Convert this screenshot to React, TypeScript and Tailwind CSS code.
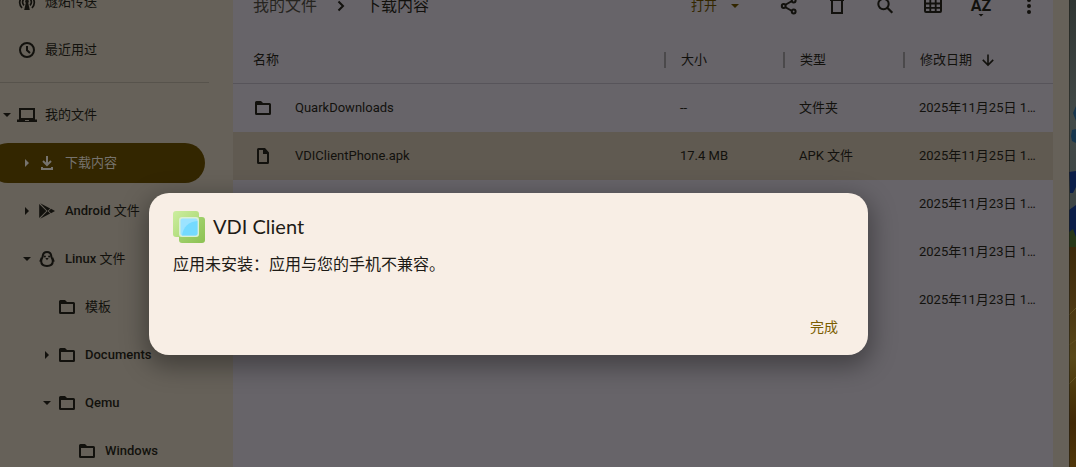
import React from "react";
import type { ReactNode } from "react";

type IconProps = { children: ReactNode; className?: string };

function Icon({ children, className = "h-5 w-5" }: IconProps) {
  return (
    <svg viewBox="0 0 20 20" className={`shrink-0 ${className}`} fill="none" stroke="currentColor" strokeWidth="2" aria-hidden="true">
      {children}
    </svg>
  );
}

const FolderIcon = () => (
  <Icon>
    <path fill="currentColor" stroke="none" fillRule="evenodd" d="M3.5 3H8l2 2h6.5A1.5 1.5 0 0 1 18 6.500V15.500a1.500 1.500 0 0 1-1.500 1.500h-13A1.500 1.500 0 0 1 2 15.500v-11A1.500 1.500 0 0 1 3.500 3ZM4 7v8h12V7Z" />
  </Icon>
);
const FileIcon = () => (
  <Icon>
    <path fill="currentColor" stroke="none" fillRule="evenodd" d="M5.500 2H12l4 4.500v10a1.500 1.500 0 0 1-1.500 1.500h-9A1.500 1.500 0 0 1 4 16.500v-13A1.500 1.500 0 0 1 5.500 2ZM6 4v12h8V8h-4V4Z" />
  </Icon>
);
const ClockIcon = () => (
  <Icon>
    <circle cx="10" cy="10" r="7" />
    <path d="M10 6v4.300l3 2.700" />
  </Icon>
);
const CastIcon = () => (
  <Icon>
    <circle cx="10" cy="9.500" r="1.800" fill="currentColor" stroke="none" />
    <path fill="currentColor" stroke="none" d="M9 10h2l1.800 8H7.200Z" />
    <path strokeWidth="1.700" d="M7 13.300a4.400 4.400 0 1 1 6 0M5 16a7.300 7.300 0 1 1 10 0" />
  </Icon>
);
const LaptopIcon = () => (
  <Icon>
    <path d="M3 4h14v10H3Z" />
    <path fill="currentColor" stroke="none" fillRule="evenodd" d="M0 14.500h20V17H0ZM8 15v1h4v-1Z" />
  </Icon>
);
const DownloadIcon = () => (
  <Icon>
    <path d="M10 3v9M6 8l4 4 4-4M5 14v2h10v-2" />
  </Icon>
);
const PlayIcon = () => (
  <Icon>
    <path fill="currentColor" stroke="none" d="M2.200 2.900 9.300 10l-7.100 7.100ZM3.200 2.200l10 5.200-2.700 2.700ZM3.200 17.800l10-5.200-2.700-2.700ZM14 7.800l4 2.200-4 2.200-2.300-2.200Z" />
  </Icon>
);
const PenguinIcon = () => (
  <Icon>
    <path d="M10 3c3 0 4.100 2 4.300 4.300.3 2 1.500 2.700 1.500 5 0 2.900-2.400 4.700-5.800 4.700s-5.800-1.800-5.800-4.700c0-2.300 1.200-3 1.500-5C5.900 5 7 3 10 3Z" />
    <path fill="currentColor" stroke="none" d="M4 8 2.200 12.500h2.500ZM16 8l1.800 4.500h-2.500ZM8.300 9h3.400L10 11.200Z" />
    <circle cx="7.900" cy="7.500" r="1" fill="currentColor" stroke="none" />
    <circle cx="12.100" cy="7.500" r="1" fill="currentColor" stroke="none" />
  </Icon>
);
const ShareIcon = () => (
  <Icon>
    <path d="m6 9 7-4M6 11l7 4" />
    <circle cx="4.700" cy="10" r="1.900" />
    <circle cx="14.700" cy="4.500" r="1.900" />
    <circle cx="14.700" cy="15.500" r="1.900" />
  </Icon>
);
const TrashIcon = () => (
  <Icon>
    <path d="M3 4h14M7.500 3h5M5 5v12h10V5" />
  </Icon>
);
const SearchIcon = () => (
  <Icon>
    <circle cx="8.500" cy="8" r="5.200" />
    <path d="m12 11.500 5.300 5.300" strokeWidth="2.200" />
  </Icon>
);
const GridIcon = () => (
  <Icon>
    <rect x="2" y="3" width="16" height="13" rx="1" />
    <path d="M2 7.500h16M2 11.800h16M7.300 3v13M12.700 3v13" strokeWidth="1.800" />
  </Icon>
);
const MoreIcon = () => (
  <Icon>
    <g fill="currentColor" stroke="none">
      <circle cx="10" cy="4" r="2" />
      <circle cx="10" cy="10" r="2" />
      <circle cx="10" cy="16" r="2" />
    </g>
  </Icon>
);
const ArrowDownIcon = () => (
  <Icon className="h-4 w-4">
    <path d="M10 3v13M3.500 9.800 10 16.300l6.500-6.500" />
  </Icon>
);
const ChevronIcon = () => (
  <Icon>
    <path d="m7.500 5.500 4.500 4.500-4.500 4.500" />
  </Icon>
);

function Caret({ open }: { open: boolean }) {
  return (
    <svg viewBox="0 0 8 8" className="h-2 w-2 shrink-0" fill="currentColor" aria-hidden="true">
      {open ? <path d="M0 2h8L4 6Z" /> : <path d="M2 0v8l4-4Z" />}
    </svg>
  );
}

type TreeItem = { label: string; suffix?: string; icon: ReactNode; pad: string; open?: boolean; selected?: boolean };

const shortcuts: TreeItem[] = [
  { label: "", suffix: "燧炻传送", icon: <CastIcon />, pad: "pl-[15px]" },
  { label: "", suffix: "最近用过", icon: <ClockIcon />, pad: "pl-[15px]" },
];
const tree: TreeItem[] = [
  { label: "", suffix: "我的文件", icon: <LaptopIcon />, pad: "pl-[15px]", open: true },
  { label: "", suffix: "下载内容", icon: <DownloadIcon />, pad: "pl-[35px]", open: false, selected: true },
  { label: "Android ", suffix: "文件", icon: <PlayIcon />, pad: "pl-[35px]", open: false },
  { label: "Linux ", suffix: "文件", icon: <PenguinIcon />, pad: "pl-[35px]", open: true },
  { label: "", suffix: "模板", icon: <FolderIcon />, pad: "pl-[55px]" },
  { label: "Documents", icon: <FolderIcon />, pad: "pl-[55px]", open: false },
  { label: "Qemu", icon: <FolderIcon />, pad: "pl-[55px]", open: true },
  { label: "Windows", icon: <FolderIcon />, pad: "pl-[75px]" },
];

function TreeRow({ item }: { item: TreeItem }) {
  return (
    <li className="py-1">
      <a
        href="#"
        className={`-ml-3 mr-7 flex h-10 items-center gap-[6px] rounded-full ${item.pad} ${item.selected ? "bg-[#332600] text-[#76736e]" : ""}`}
      >
        <span className="flex w-2">{item.open !== undefined && <Caret open={item.open} />}</span>
        <span className="flex items-center gap-2">
          {item.icon}
          <span className="whitespace-nowrap font-medium">
            {item.label}
            {item.suffix && <span className="font-normal">{item.suffix}</span>}
          </span>
        </span>
      </a>
    </li>
  );
}

const files = [
  { name: "QuarkDownloads", icon: <FolderIcon />, size: "--", type: "文件夹", date: "2025年11月25日 1…" },
  { name: "VDIClientPhone.apk", icon: <FileIcon />, size: "17.4 MB", type: "APK 文件", date: "2025年11月25日 1…", selected: true },
  { name: "", icon: null, size: "", type: "", date: "2025年11月23日 1…" },
  { name: "", icon: null, size: "", type: "", date: "2025年11月23日 1…" },
  { name: "", icon: null, size: "", type: "", date: "2025年11月23日 1…" },
];

const tools = [
  { label: "分享", icon: <ShareIcon /> },
  { label: "删除", icon: <TrashIcon /> },
  { label: "搜索", icon: <SearchIcon /> },
  { label: "网格视图", icon: <GridIcon /> },
];

function Toolbar() {
  return (
    <header className="-mt-6 flex h-15 items-center pl-5">
      <nav className="flex flex-1 items-center gap-[14px] text-base">
        <a href="#" className="text-[#26241f]">我的文件</a>
        <ChevronIcon />
        <a href="#">下载内容</a>
      </nav>
      <button type="button" className="mr-[26px] flex items-center gap-[14px] text-[#332600]">
        打开
        <Caret open />
      </button>
      {tools.map((tool) => (
        <button key={tool.label} type="button" aria-label={tool.label} className="flex w-12 justify-center">
          {tool.icon}
        </button>
      ))}
      <button type="button" className="relative flex w-12 justify-center text-base font-bold">
        AZ
        <span className="absolute top-5 flex h-1 w-2 overflow-hidden">
          <svg viewBox="0 0 8 4" fill="currentColor" aria-hidden="true"><path d="M1.500 0h5L4 2.500Z" /></svg>
        </span>
      </button>
      <button type="button" aria-label="更多" className="flex w-12 justify-center">
        <MoreIcon />
      </button>
    </header>
  );
}

function FileTable() {
  return (
    <table className="w-full table-fixed border-separate border-spacing-0 text-left">
      <colgroup>
        <col />
        <col className="w-[119px]" />
        <col className="w-[120px]" />
        <col className="w-[150px]" />
      </colgroup>
      <thead>
        <tr className="h-12">
          <th className="border-b border-[#57545a] p-0 pl-5 font-normal">名称</th>
          {["大小", "类型", "修改日期"].map((label) => (
            <th key={label} className="border-b border-[#57545a] p-0 font-normal">
              <span className="flex h-4 items-center gap-2 border-l-2 border-[#4b494b] pl-[15px]">
                {label}
                {label === "修改日期" && <ArrowDownIcon />}
              </span>
            </th>
          ))}
        </tr>
      </thead>
      <tbody>
        {files.map((file, index) => (
          <tr key={index} className={`h-12 ${file.selected ? "bg-[#605a51]" : ""}`}>
            <td className="p-0 pl-5">
              <span className="flex items-center gap-[22px]">
                {file.icon}
                {file.name}
              </span>
            </td>
            <td className="p-0 pl-4">{file.size}</td>
            <td className="p-0 pl-4">{file.type}</td>
            <td className="truncate p-0 pl-4">{file.date}</td>
          </tr>
        ))}
      </tbody>
    </table>
  );
}

function Wallpaper() {
  return (
    <svg viewBox="0 0 7 467" preserveAspectRatio="none" className="h-full w-[7px] shrink-0" aria-hidden="true">
      <defs>
        <linearGradient id="sky" x1="0" y1="0" x2="0" y2="1">
          <stop offset="0" stopColor="#303633" />
          <stop offset=".5" stopColor="#434a48" />
          <stop offset="1" stopColor="#3c4445" />
        </linearGradient>
        <linearGradient id="field" x1="0" y1="0" x2="0" y2="1">
          <stop offset="0" stopColor="#3c2a0b" />
          <stop offset=".25" stopColor="#4a3511" />
          <stop offset=".5" stopColor="#594819" />
          <stop offset=".65" stopColor="#4c380b" />
          <stop offset=".8" stopColor="#422907" />
          <stop offset="1" stopColor="#50370a" />
        </linearGradient>
      </defs>
      <path fill="url(#sky)" d="M0 0h7v235H0Z" />
      <path fill="#17364e" d="M7 106 4 113l3 8ZM3 130l4-1v14l-4-2-1-5Z" />
      <path fill="#0b1e49" d="M0 172l7-1v16l-3 6H1ZM0 210l7-5v33H0Z" />
      <path fill="#273818" d="M0 232l4-3 3 8v14H0Z" />
      <path fill="url(#field)" d="M0 247h7v220H0Z" />
      <path stroke="#625121" strokeWidth="1" d="m0 315 7-7M0 345l7-5M0 384l7-7" />
      <path fill="#1c1c15" d="M0 0h1v467H0Z" opacity=".5" />
    </svg>
  );
}

function AppLogo() {
  return (
    <svg viewBox="0 0 32 32" className="h-8 w-8 shrink-0" aria-hidden="true">
      <defs>
        <linearGradient id="back" x1="0" y1="0" x2="1" y2="1">
          <stop stopColor="#ccee9f" />
          <stop offset="1" stopColor="#a5d36c" />
        </linearGradient>
        <linearGradient id="front" x1="0" y1="0" x2="1" y2="1">
          <stop stopColor="#addb7c" />
          <stop offset="1" stopColor="#8cc152" />
        </linearGradient>
      </defs>
      <rect x="6" y="6" width="26" height="26" rx="3" fill="url(#front)" />
      <rect width="26" height="26" rx="3" fill="url(#back)" />
      <rect x="6" y="6" width="20" height="20" rx="3" fill="#d9efd4" />
      <rect x="7.500" y="7.500" width="17" height="17" rx="2" fill="#9be3ff" />
      <path fill="#74daff" d="M9 24.500C10 16 16 10.500 24.500 10v12.500a2 2 0 0 1-2 2Z" />
    </svg>
  );
}

function InstallDialog() {
  return (
    <div className="absolute inset-0 flex items-start pl-[149px] pr-[208px] pt-[193px]">
      <section
        role="dialog"
        aria-labelledby="dialog-title"
        className="flex-1 rounded-[20px] bg-[#f8eee5] px-6 pb-[10px] pt-[18px] text-[#1e1b16] shadow-[0_8px_24px_4px_rgba(0,0,0,0.35)]"
      >
        <div className="flex items-center gap-2">
          <AppLogo />
          <h1 id="dialog-title" className="pb-[2px] font-[Lato,'Noto_Sans_CJK_SC',sans-serif] text-xl">VDI Client</h1>
        </div>
        <p className="mt-[10px] text-base">应用未安装：应用与您的手机不兼容。</p>
        <div className="mt-8 flex justify-end">
          <button type="button" className="px-[6px] py-1 text-sm leading-7 text-[#7b5d00]">完成</button>
        </div>
      </section>
    </div>
  );
}

export default function App() {
  return (
    <div className="relative flex h-screen overflow-hidden bg-[#666159] font-[Roboto,'Noto_Sans_CJK_SC',sans-serif] text-[13px] text-[#12110d]">
      <aside className="w-[233px] shrink-0">
        <ul className="-mt-[22px]">
          {shortcuts.map((item) => <TreeRow key={item.suffix} item={item} />)}
        </ul>
        <hr className="my-2 mr-6 border-[#57534c]" />
        <ul>
          {tree.map((item) => <TreeRow key={`${item.label}${item.suffix}`} item={item} />)}
        </ul>
      </aside>
      <main className="mr-4 min-w-0 flex-1 bg-[#676469]">
        <Toolbar />
        <FileTable />
      </main>
      <Wallpaper />
      <InstallDialog />
    </div>
  );
}
